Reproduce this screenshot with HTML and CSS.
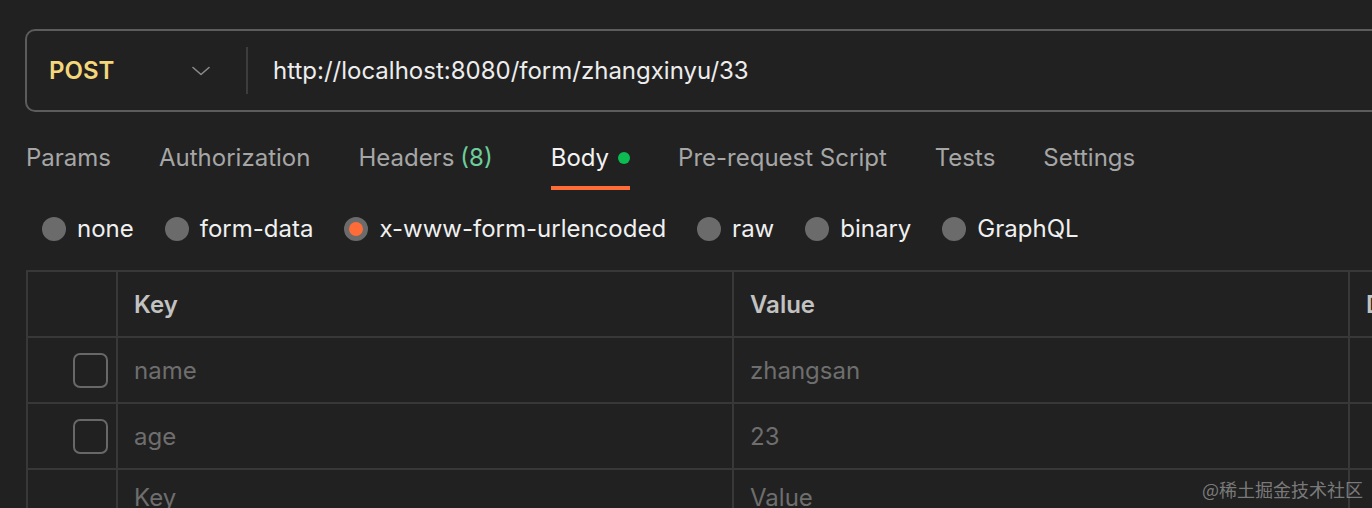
FILE: index.html
```html
<!DOCTYPE html>
<html lang="en">
<head>
<meta charset="utf-8">
<title>POST request</title>
<link rel="stylesheet" href="styles.css">
</head>
<body>
<div class="page">
  <div class="urlbar">
    <div class="method">
      <span class="method-name">POST</span>
      <svg class="chevron" width="18" height="10" viewBox="0 0 18 10"><path d="M1 1.5 L9 8.5 L17 1.5" fill="none" stroke="#8a8a8a" stroke-width="1.6" stroke-linecap="round" stroke-linejoin="round"/></svg>
    </div>
    <div class="divider"></div>
    <div class="url">http://localhost:8080/form/zhangxinyu/33</div>
  </div>

  <nav class="tabs">
    <span class="tab">Params</span>
    <span class="tab">Authorization</span>
    <span class="tab tab-headers">Headers <span class="count">(8)</span></span>
    <span class="tab active">Body <span class="dot"></span></span>
    <span class="tab">Pre-request Script</span>
    <span class="tab">Tests</span>
    <span class="tab">Settings</span>
  </nav>

  <div class="radios">
    <label class="radio"><span class="circle"></span>none</label>
    <label class="radio"><span class="circle"></span>form-data</label>
    <label class="radio"><span class="circle checked"></span>x-www-form-urlencoded</label>
    <label class="radio"><span class="circle"></span>raw</label>
    <label class="radio"><span class="circle"></span>binary</label>
    <label class="radio"><span class="circle"></span>GraphQL</label>
  </div>

  <table class="kv">
    <tr class="head">
      <td class="c-check"></td>
      <td>Key</td>
      <td>Value</td>
      <td>Description</td>
    </tr>
    <tr>
      <td class="c-check"><span class="box"></span></td>
      <td class="ph">name</td>
      <td class="ph">zhangsan</td>
      <td></td>
    </tr>
    <tr>
      <td class="c-check"><span class="box"></span></td>
      <td class="ph">age</td>
      <td class="ph">23</td>
      <td></td>
    </tr>
    <tr class="new-row">
      <td class="c-check"></td>
      <td class="ph">Key</td>
      <td class="ph">Value</td>
      <td></td>
    </tr>
  </table>

  <div class="watermark">@稀土掘金技术社区</div>
</div>
</body>
</html>
```

FILE: styles.css
```css
html, body {
  margin: 0;
  padding: 0;
  background: #212121;
}
body {
  width: 1372px;
  height: 508px;
  overflow: hidden;
  font-family: Inter, "Noto Sans", "Noto Sans CJK SC", sans-serif;
  color: #ececec;
}
.page {
  position: relative;
  width: 1372px;
  height: 508px;
  padding: 29px 0 0 25px;
  box-sizing: border-box;
  overflow: hidden;
}
.urlbar {
  display: flex;
  align-items: center;
  width: 1420px;
  height: 83px;
  box-sizing: border-box;
  border: 2px solid #5c5c5c;
  border-radius: 10px;
}
.method {
  display: flex;
  align-items: center;
  justify-content: space-between;
  width: 219px;
  box-sizing: border-box;
  padding: 0 36px 0 22px;
}
.method-name {
  font-size: 24px;
  font-weight: 600;
  color: #f5d67b;
}
.chevron { display: block; }
.divider {
  width: 2px;
  height: 47px;
  background: #3d3d3d;
}
.url {
  padding-left: 25px;
  font-size: 24px;
  color: #ededed;
  white-space: nowrap;
}
.tabs {
  display: flex;
  gap: 48px;
  margin-top: 31px;
  margin-left: 1px;
}
.tab {
  display: flex;
  align-items: center;
  gap: 9px;
  line-height: 30px;
  font-size: 24px;
  color: #a6a6a6;
  padding-bottom: 13px;
  border-bottom: 4px solid transparent;
  white-space: nowrap;
}
.tab-headers { margin-right: 10px; }
.tab .count { color: #6ccf9a; margin-left: -3px; }
.tab.active {
  color: #f2f2f2;
  border-bottom-color: #ff6c37;
}
.dot {
  width: 12px;
  height: 12px;
  border-radius: 50%;
  background: #0cbb52;
}
.radios {
  display: flex;
  gap: 31px;
  margin-top: 24px;
  margin-left: 17px;
}
.radio {
  display: flex;
  align-items: center;
  gap: 11px;
  line-height: 30px;
  font-size: 24px;
  color: #f0f0f0;
}
.circle {
  width: 24px;
  height: 24px;
  border-radius: 50%;
  background: #6b6b6b;
  box-sizing: border-box;
}
.circle.checked {
  background: #ff6c37;
  border: 5px solid #6b6b6b;
}
.kv {
  margin-top: 26px;
  margin-left: 1px;
  border-collapse: collapse;
  table-layout: fixed;
  width: 1500px;
}
.kv td {
  height: 64px;
  border: 2px solid #383838;
  padding: 0 16px;
  font-size: 24px;
  white-space: nowrap;
  overflow: hidden;
}
.kv td:nth-child(1) { width: 90px; padding: 0 8px 0 0; box-sizing: border-box; text-align: right; }
.kv td:nth-child(2) { width: 616px; box-sizing: border-box; }
.kv td:nth-child(3) { width: 616px; box-sizing: border-box; }
.kv .head td {
  font-weight: 600;
  color: #c2c2c2;
}
.kv .ph { color: #6e6e6e; }
.kv .new-row td {
  vertical-align: top;
  line-height: 30px;
  padding-top: 13px;
}
.box {
  display: inline-block;
  vertical-align: middle;
  width: 35px;
  height: 35px;
  box-sizing: border-box;
  border: 2px solid #686868;
  border-radius: 7px;
}
.watermark {
  position: absolute;
  right: 9px;
  bottom: 6px;
  font-size: 18px;
  color: rgba(200, 200, 200, 0.55);
  font-family: "Noto Sans CJK SC", sans-serif;
}
```
